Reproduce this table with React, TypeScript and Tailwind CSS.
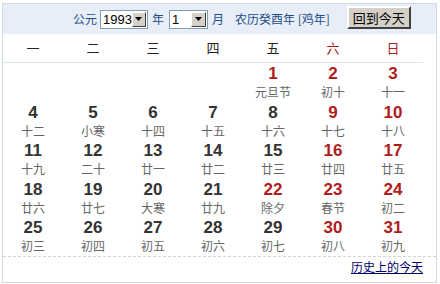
import React from 'react';

type Day = { d: number; l: string; red?: boolean } | null;

const weeks: Day[][] = [
  [null, null, null, null, { d: 1, l: '元旦节', red: true }, { d: 2, l: '初十', red: true }, { d: 3, l: '十一', red: true }],
  [{ d: 4, l: '十二' }, { d: 5, l: '小寒' }, { d: 6, l: '十四' }, { d: 7, l: '十五' }, { d: 8, l: '十六' }, { d: 9, l: '十七', red: true }, { d: 10, l: '十八', red: true }],
  [{ d: 11, l: '十九' }, { d: 12, l: '二十' }, { d: 13, l: '廿一' }, { d: 14, l: '廿二' }, { d: 15, l: '廿三' }, { d: 16, l: '廿四', red: true }, { d: 17, l: '廿五', red: true }],
  [{ d: 18, l: '廿六' }, { d: 19, l: '廿七' }, { d: 20, l: '大寒' }, { d: 21, l: '廿九' }, { d: 22, l: '除夕', red: true }, { d: 23, l: '春节', red: true }, { d: 24, l: '初二', red: true }],
  [{ d: 25, l: '初三' }, { d: 26, l: '初四' }, { d: 27, l: '初五' }, { d: 28, l: '初六' }, { d: 29, l: '初七' }, { d: 30, l: '初八', red: true }, { d: 31, l: '初九', red: true }],
];

const weekdays = ['一', '二', '三', '四', '五', '六', '日'];

const cjk = { fontFamily: '"Noto Sans CJK SC", "Noto Sans", sans-serif' };

const Select = ({ value, width }: { value: string; width: string }) => (
  <span className={`inline-flex h-[19px] items-center border border-[#7f9db9] bg-white ${width}`}>
    <span className="flex-1 pl-[2px] text-[13px] leading-none text-black" style={{ fontFamily: '"Liberation Sans", sans-serif' }}>
      {value}
    </span>
    <span className="mr-[1px] flex h-[15px] w-[15px] items-center justify-center border border-t-white border-l-white border-r-[#404040] border-b-[#404040] bg-[#d4d0c8]">
      <svg width="7" height="4" viewBox="0 0 7 4">
        <path d="M0 0h7L3.5 4z" fill="#000" />
      </svg>
    </span>
  </span>
);

export default function App() {
  return (
    <div className="ml-[2px] mt-[3px] h-[280px] w-[435px] border border-[#cfd9e4] bg-white" style={cjk}>
      {/* header */}
      <div className="flex h-[30px] items-center bg-[#e8eef7] pl-[70px] text-[12px] text-[#1f4e8c]">
        <span>公元</span>
        <span className="ml-[3px]"><Select value="1993" width="w-[48px]" /></span>
        <span className="ml-[4px]">年</span>
        <span className="ml-[5px]"><Select value="1" width="w-[39px]" /></span>
        <span className="ml-[4px]">月</span>
        <span className="ml-[11px]">农历癸酉年 [鸡年]</span>
        <button className="ml-[17px] mt-[-4px] h-[23px] w-[64px] border-2 border-t-white border-l-white border-r-[#404040] border-b-[#404040] bg-[#d4d0c8] text-[13px] leading-none text-black">
          回到今天
        </button>
      </div>

      {/* weekdays */}
      <div className="grid h-[29px] w-[420px] grid-cols-7 items-center border-b border-[#dde3ea] text-[13px]">
        {weekdays.map((w, i) => (
          <div key={w} className={`text-center ${i >= 5 ? 'text-[#a82020]' : 'text-[#222]'}`}>
            {w}
          </div>
        ))}
      </div>

      {/* days */}
      <div className="w-[420px]">
        {weeks.map((row, ri) => (
          <div key={ri} className="grid h-[38.5px] grid-cols-7 pt-[1px]">
            {row.map((c, ci) => (
              <div key={ci} className="text-center">
                {c && (
                  <>
                    <div
                      className={`text-[17px] font-bold leading-[19px] ${c.red ? 'text-[#b01c1c]' : 'text-[#333]'}`}
                      style={{ fontFamily: '"Liberation Sans", Arial, sans-serif' }}
                    >
                      {c.d}
                    </div>
                    <div className="text-[12px] leading-[18px] text-[#666]">{c.l}</div>
                  </>
                )}
              </div>
            ))}
          </div>
        ))}
      </div>

      <div className="border-t border-dashed border-[#d4d4d4]" />
      <div className="flex w-[420px] justify-end pt-[1px]">
        <a href="#" className="text-[12px] text-[#000066] underline">历史上的今天</a>
      </div>
    </div>
  );
}
